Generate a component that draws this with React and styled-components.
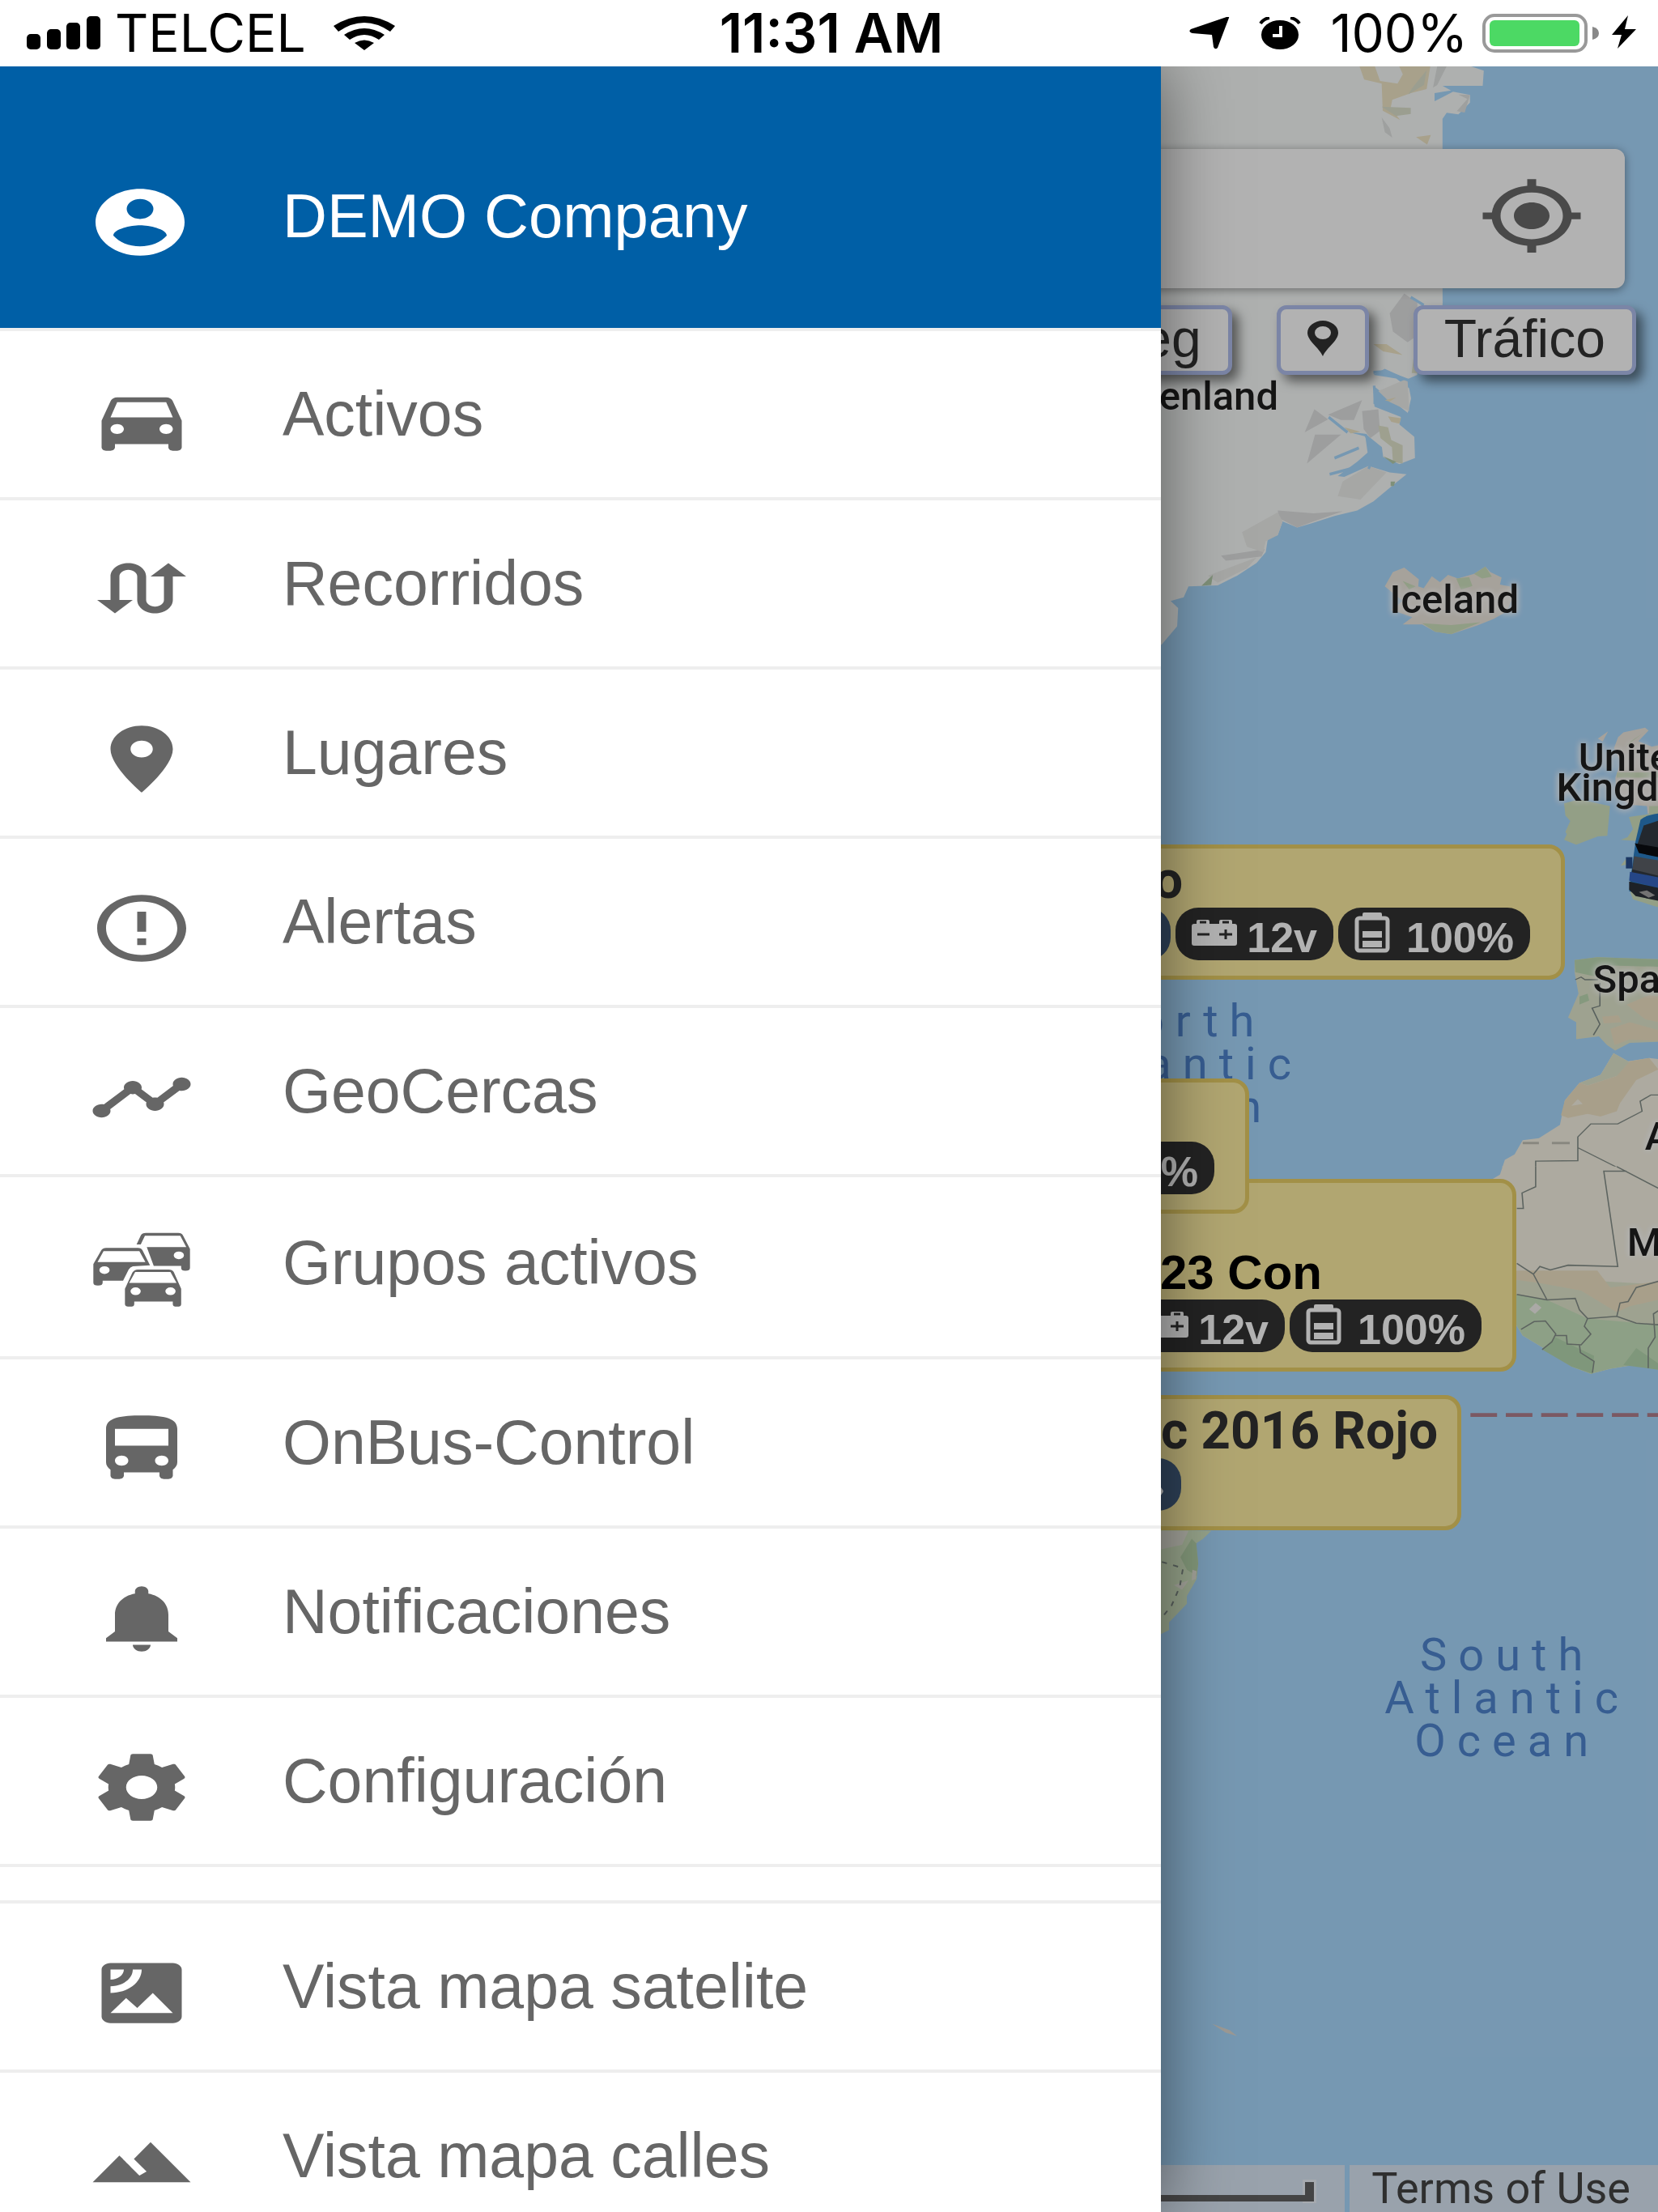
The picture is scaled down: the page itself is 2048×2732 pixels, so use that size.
import React from 'react';
import styled, { createGlobalStyle } from 'styled-components';

const icons = {
  account:
    'M12 2C6.48 2 2 6.48 2 12s4.48 10 10 10 10-4.48 10-10S17.52 2 12 2zm0 3c1.66 0 3 1.34 3 3s-1.34 3-3 3-3-1.34-3-3 1.34-3 3-3zm0 14.2c-2.5 0-4.71-1.28-6-3.22.03-1.99 4-3.08 6-3.08 1.99 0 5.97 1.09 6 3.08-1.29 1.94-3.5 3.22-6 3.22z',
  car: 'M18.92 6.01C18.72 5.42 18.16 5 17.5 5h-11c-.66 0-1.21.42-1.42 1.01L3 12v8c0 .55.45 1 1 1h1c.55 0 1-.45 1-1v-1h12v1c0 .55.45 1 1 1h1c.55 0 1-.45 1-1v-8l-2.08-5.99zM6.5 16c-.83 0-1.5-.67-1.5-1.5S5.67 13 6.5 13s1.5.67 1.5 1.5S7.33 16 6.5 16zm11 0c-.83 0-1.5-.67-1.5-1.5s.67-1.5 1.5-1.5 1.5.67 1.5 1.5-.67 1.5-1.5 1.5zM5 11l1.5-4.5h11L19 11H5z',
  swap: 'M18 4l-4 4h3v7c0 1.1-.9 2-2 2s-2-.9-2-2V8c0-2.21-1.79-4-4-4S5 5.79 5 8v7H2l4 4 4-4H7V8c0-1.1.9-2 2-2s2 .9 2 2v7c0 2.21 1.79 4 4 4s4-1.79 4-4V8h3l-4-4z',
  place:
    'M12 2C8.13 2 5 5.13 5 9c0 5.25 7 13 7 13s7-7.75 7-13c0-3.87-3.13-7-7-7zm0 9.5c-1.38 0-2.5-1.12-2.5-2.5s1.12-2.5 2.5-2.5 2.5 1.12 2.5 2.5-1.12 2.5-2.5 2.5z',
  alert:
    'M11 15h2v2h-2zm0-8h2v6h-2zm.99-5C6.47 2 2 6.48 2 12s4.47 10 9.99 10C17.52 22 22 17.52 22 12S17.52 2 11.99 2zM12 20c-4.42 0-8-3.58-8-8s3.58-8 8-8 8 3.58 8 8-3.58 8-8 8z',
  timeline:
    'M23 8c0 1.1-.9 2-2 2-.18 0-.35-.02-.51-.07l-3.56 3.55c.05.16.07.34.07.52 0 1.1-.9 2-2 2s-2-.9-2-2c0-.18.02-.36.07-.52l-2.55-2.55c-.16.05-.34.07-.52.07s-.36-.02-.52-.07l-4.55 4.56c.05.16.07.33.07.51 0 1.1-.9 2-2 2s-2-.9-2-2 .9-2 2-2c.18 0 .35.02.51.07l4.56-4.55C8.02 9.36 8 9.18 8 9c0-1.1.9-2 2-2s2 .9 2 2c0 .18-.02.36-.07.52l2.55 2.55c.16-.05.34-.07.52-.07s.36.02.52.07l3.55-3.56C19.02 8.35 19 8.18 19 8c0-1.1.9-2 2-2s2 .9 2 2z',
  bus: 'M4 16c0 .88.39 1.67 1 2.22V20c0 .55.45 1 1 1h1c.55 0 1-.45 1-1v-1h8v1c0 .55.45 1 1 1h1c.55 0 1-.45 1-1v-1.78c.61-.55 1-1.34 1-2.22V6c0-3.5-3.58-4-8-4s-8 .5-8 4v10zm3.5 1c-.83 0-1.5-.67-1.5-1.5S6.67 14 7.5 14s1.5.67 1.5 1.5S8.33 17 7.5 17zm9 0c-.83 0-1.5-.67-1.5-1.5s.67-1.5 1.5-1.5 1.5.67 1.5 1.5-.67 1.5-1.5 1.5zm1.5-6H6V6h12v5z',
  bell: 'M12 22c1.1 0 2-.9 2-2h-4c0 1.1.89 2 2 2zm6-6v-5c0-3.07-1.64-5.64-4.5-6.32V4c0-.83-.67-1.5-1.5-1.5s-1.5.67-1.5 1.5v.68C7.63 5.36 6 7.92 6 11v5l-2 2v1h16v-1l-2-2z',
  settings:
    'M19.43 12.98c.04-.32.07-.64.07-.98s-.03-.66-.07-.98l2.11-1.65c.19-.15.24-.42.12-.64l-2-3.46c-.12-.22-.39-.3-.61-.22l-2.49 1c-.52-.4-1.08-.73-1.69-.98l-.38-2.65C14.46 2.18 14.25 2 14 2h-4c-.25 0-.46.18-.49.42l-.38 2.65c-.61.25-1.17.59-1.69.98l-2.49-1c-.23-.09-.49 0-.61.22l-2 3.46c-.13.22-.07.49.12.64l2.11 1.65c-.04.32-.07.65-.07.98s.03.66.07.98l-2.11 1.65c-.19.15-.24.42-.12.64l2 3.46c.12.22.39.3.61.22l2.49-1c.52.4 1.08.73 1.69.98l.38 2.65c.03.24.24.42.49.42h4c.25 0 .46-.18.49-.42l.38-2.65c.61-.25 1.17-.59 1.69-.98l2.49 1c.23.09.49 0 .61-.22l2-3.46c.12-.22.07-.49-.12-.64l-2.11-1.65zM12 15.5c-1.93 0-3.5-1.57-3.5-3.5s1.57-3.5 3.5-3.5 3.5 1.57 3.5 3.5-1.57 3.5-3.5 3.5z',
  satellite:
    'M19 3H5c-1.1 0-2 .9-2 2v14c0 1.1.9 2 2 2h14c1.1 0 2-.9 2-2V5c0-1.1-.9-2-2-2zM5 4.99h3C8 6.65 6.66 8 5 8V4.99zM5 12v-2c2.76 0 5-2.25 5-5.01h2C12 8.86 8.87 12 5 12zm0 6l3.5-4.5 2.5 3.01L14.5 12l4.5 6H5z',
  terrain: 'M14 6l-3.75 5 2.85 3.8-1.6 1.2C9.81 13.75 7 10 7 10l-6 8h22L14 6z',
  gps: 'M12 8c-2.21 0-4 1.79-4 4s1.79 4 4 4 4-1.79 4-4-1.79-4-4-4zm8.94 3c-.46-4.17-3.77-7.48-7.94-7.94V1h-2v2.06C6.83 3.52 3.52 6.83 3.06 11H1v2h2.06c.46 4.17 3.77 7.48 7.94 7.94V23h2v-2.06c4.17-.46 7.48-3.77 7.94-7.94H23v-2h-2.06zM12 19c-3.87 0-7-3.13-7-7s3.13-7 7-7 7 3.13 7 7-3.13 7-7 7z',
};

const menu = [
  { label: 'Activos', icon: 'car' },
  { label: 'Recorridos', icon: 'swap' },
  { label: 'Lugares', icon: 'place' },
  { label: 'Alertas', icon: 'alert' },
  { label: 'GeoCercas', icon: 'timeline' },
  { label: 'Grupos activos', icon: 'group', tall: true },
  { label: 'OnBus-Control', icon: 'bus' },
  { label: 'Notificaciones', icon: 'bell' },
  { label: 'Configuración', icon: 'settings' },
];

const mapMenu = [
  { label: 'Vista mapa satelite', icon: 'satellite' },
  { label: 'Vista mapa calles', icon: 'terrain' },
];

const Icon = ({ name }) => (
  <IconSvg viewBox='0 0 24 24' preserveAspectRatio='none' aria-hidden='true'>
    <path d={icons[name]} />
  </IconSvg>
);

const GroupIcon = () => (
  <IconSvg
    viewBox='189 1204 230 250'
    preserveAspectRatio='none'
    aria-hidden='true'
  >
    <path
      fillRule='evenodd'
      d='M268 1390L284 1340Q288 1330 296 1330H362Q370 1330 373 1338L389 1390V1438Q389 1446 380 1446 371 1446 371 1438V1430H288V1438Q288 1446 279 1446 268 1446 268 1438ZM277 1372H379L366 1338H290Z M280 1398a11 12 0 1 0 22 0a11 12 0 1 0 -22 0Z M355 1398a11 12 0 1 0 22 0a11 12 0 1 0 -22 0Z'
    />
    <path
      fillRule='evenodd'
      d='M200 1313L216 1273Q219 1263 228 1263H296Q303 1263 306 1271L322 1317 285 1320Q279 1322 276 1330L264 1365H220V1371Q220 1380 210 1380 200 1380 200 1371ZM209 1307H312L299 1273H222Z M213 1332a11 12 0 1 0 22 0a11 12 0 1 0 -22 0Z'
    />
    <path
      fillRule='evenodd'
      d='M293 1252L302 1224Q305 1216 313 1216H383Q390 1216 393 1224L408 1266V1325Q408 1334 398 1334 389 1334 389 1325V1319H330L315 1260H400L387 1225H311L302 1252Z M373 1286a11 12 0 1 0 22 0a11 12 0 1 0 -22 0Z'
    />
  </IconSvg>
);

const BatteryIcon = () => (
  <svg width='44' height='50' viewBox='0 0 44 50' aria-hidden='true'>
    <rect x='10' y='0' width='24' height='8' rx='2' fill='#fff' />
    <rect
      x='3'
      y='7'
      width='38'
      height='40'
      rx='3'
      fill='none'
      stroke='#fff'
      strokeWidth='5'
    />
    <path d='M10 23h24v8H10zM10 35h24v8H10z' fill='#fff' />
  </svg>
);

const CarBatteryIcon = () => (
  <svg width='56' height='32' viewBox='0 0 56 32' aria-hidden='true'>
    <path
      fill='#fff'
      d='M8 0h12q2 0 2 2v3h12V2q0-2 2-2h12q2 0 2 2v3h3q3 0 3 3v21q0 3-3 3H3q-3 0-3-3V8q0-3 3-3h3V2q0-2 2-2z'
    />
    <path stroke='#333' strokeWidth='3' d='M7 18h15M34 18h16M42 12v12M10 3h8M38 3h8' />
  </svg>
);

const StatusBarView = () => (
  <StatusBar>
    <StatusGroup>
      <svg width='91' height='42' viewBox='0 0 91 42' aria-hidden='true'>
        <rect y='22' width='17' height='19' rx='5' />
        <rect x='25' y='16' width='17' height='25' rx='5' />
        <rect x='49' y='8' width='17' height='33' rx='5' />
        <rect x='74' y='0' width='17' height='41' rx='5' />
      </svg>
      <span>TELCEL</span>
      <Wifi width='76' height='42' viewBox='0 0 76 42' aria-hidden='true'>
        <path d='M0 12Q38-12 76 12l-6 7Q38-3 6 19z' />
        <path d='M13 23Q38 7 63 23l-7 6Q38 17 20 29z' />
        <path d='M26 33Q38 26 50 33L38 42z' />
      </Wifi>
    </StatusGroup>
    <Clock>11:31 AM</Clock>
    <StatusGroup $end>
      <StatusIcons>
        <svg width='52' height='40' viewBox='0 0 52 40' aria-hidden='true'>
          <path d='M49 1L35 38q-3 3-5-1l-2-15-24-2q-6-2-2-5L46 0q4-1 3 1z' />
        </svg>
        <svg width='52' height='40' viewBox='0 0 52 40' aria-hidden='true'>
          <ellipse cx='26' cy='22' rx='23' ry='18' />
          <path
            d='M2 8Q6 2 13 1M50 8Q46 2 39 1'
            stroke='#000'
            strokeWidth='4'
            fill='none'
          />
          <path d='M27 11v12H17' stroke='#fff' strokeWidth='4' fill='none' />
        </svg>
      </StatusIcons>
      <span>100%</span>
      <svg width='190' height='48' viewBox='0 0 190 48' aria-hidden='true'>
        <rect
          x='2'
          y='2'
          width='126'
          height='44'
          rx='13'
          fill='none'
          stroke='#999'
          strokeWidth='4'
        />
        <rect x='9' y='8' width='111' height='32' rx='6' fill='#4cd964' />
        <path d='M136 16q8 2 8 8t-8 8z' fill='#888' />
        <path d='M180 2l-20 24h12l-5 17 23-24h-14z' />
      </svg>
    </StatusGroup>
  </StatusBar>
);

const MapDrawing = () => (
  <Terrain viewBox='1434 82 614 2650' preserveAspectRatio='xMaxYMin slice' aria-hidden='true'>
    {/* northern Greenland */}
    <g transform='translate(1024 0) scale(.6531 .3333)'>
      <path
        fill='#f9fcfb'
        d='M600 240H1205L1238 262 1236 318 1185 318 1172 318 1160 318 1176 335 1145 345 1145 375 1180 340 1212 352 1212 380 1190 424 1168 418 1160 440V1160H600Z'
      />
      <path fill='#f1e7c7' d='M1003 245H1032L1042 300 1075 310 1085 275 1078 245H1137L1130 330 1100 345 1065 370 1062 400 1080 445 1047 410 1045 310 1012 295ZM1110 508l28-8-7 35z' />
      <path fill='#e3e5e4' d='M1150 245h18l-18 70-8 10zM1190 350l22 2-10 65-15-5 20-45zM1045 435l15 40 5 35-14-20z' />
      <path fill='#dfe3cf' d='M1130 260l-5 55-30 35 10-30zM1045 395l55 5v22l-28 8z' />
    </g>
    {/* eastern Greenland, Iceland */}
    <g transform='translate(1420 340) scale(.4005 .4464)'>
      <path
        fill='#f9fcfb'
        d='M0 0H900L903 78 880 80 825 90 825 275 795 287 725 258 690 275 760 285 800 312 806 340 796 380 690 305 690 355 775 390 770 412 816 446 818 505 770 522 720 502 716 475 665 438 610 432 552 392 600 430 665 445 672 490 640 515 580 555 600 557 675 527 740 545 792 550 750 580 690 625 640 650 570 665 500 685 455 697 410 680 395 718 365 725 358 765 330 795 270 830 210 857 120 860 105 890 65 900 88 920 85 970 38 1020 0 1040Z'
      />
      <path fill='#e1e2e3' d='M740 105L785 50 825 75 828 165 795 185 750 155ZM550 385L655 345 630 400 590 400ZM508 370l42 28-72 36zM510 440h80l-105 80zM395 650l110 8 90-6-95 30-45 15-55-25zM220 775l135-18-10 20-110 12zM655 375l50-5 5 60-30 20-20-25z' />
      <path fill='#eeefec' d='M285 710L395 655 410 680 395 718 358 735 350 765 300 750ZM595 570L675 527 730 545 650 620 580 610ZM705 320l90-35 5 90-60-25zM180 830L330 780 300 810 210 850z' />
      <path fill='#f1e7c7' d='M690 190h40l50 30-60-10zM735 390l40 5-5 15-25-5zM600 420l50 12-30 5zM725 345l35-8-20 12z' />
      <path fill='#e2e6cd' d='M705 415l30 5 10 35 35 15v50l-30-5-3-40-35-25zM820 180h10v90h-22z' />
      <path fill='#b7cfae' d='M160 858l35-30-5 28zM743 570h14l-4 12h-10zM720 500l40 15-10 6z' />
      <path fill='none' stroke='#aadaff' strokeWidth='8' d='M805 60l40 22M690 268l35-2 80 26M552 392l58 42M570 505l75-28M555 550l75-18M692 305l5 55 100 35M665 440l30 50-20 45' />
      <path
        fill='#eee8de'
        d='M725 860L750 820 785 808 830 840 828 860 845 865 870 832 895 848 920 828 950 838 1000 825 1035 805 1050 820 1085 835 1080 855 1110 860 1120 890 1100 930 1060 950 1010 968 930 992 880 985 840 965 780 965 810 945 745 925 780 900Z'
      />
      <path fill='#cfe2bf' d='M945 838l40-4 10 25-35 10zM1000 825l35-20 20 28-30 5zM840 962l90 5 90-8-90 33-50-7zM780 845l40 15-20 8z' />
    </g>
    {/* British Isles */}
    <g transform='translate(1930 880) scale(.3333)'>
      <path fill='#eee8de' d='M190 130L205 90 225 72 305 55 318 65 280 105 330 125 354 120V350L315 375 312 345 250 340 200 300 195 240 215 180ZM130 95l38-27-20 38z' />
      <path fill='#d3e4c0' d='M5 335L60 320 175 345 165 455 130 457 50 488 5 470 15 450 10 440 28 400 10 380ZM245 385L354 370V480L215 470 240 460 260 430ZM215 565l20-25 20 20zM245 650l109 30v40l-94-30zM200 220h154v20H200zM290 80l22-15-60 40-20 20zM320 345h34v30h-34z' />
    </g>
    {/* Iberia and the Maghreb */}
    <g transform='translate(1420 1000) scale(.4005 .3333)'>
      <path fill='#e3e9cf' d='M1310 555L1380 545 1568 552V858L1480 862 1435 890 1410 870 1385 838 1315 848V785L1290 768 1322 680 1310 600Z' />
      <path fill='#bfdcb5' d='M1310 555L1380 545 1568 552V580L1400 575 1370 615 1312 600ZM1325 690l25-10 5 25-30 15z' />
      <path fill='#f1e4c6' d='M1470 720l70-35 28 5v95l-40-10zM1420 810l60-25 88 30v40l-90-5-45 20zM1395 765l50-5 10 25-55 5z' />
      <path fill='none' stroke='#7f8a86' strokeWidth='4' d='M1312 628l18-10 12 10h40M1388 640v85l-24 8 24 60-20 40' />
      <path fill='#f8f4e6' d='M1430 900L1475 930 1540 918 1568 922V1440H1120L1055 1368 1080 1350 1095 1295 1125 1275 1150 1222 1200 1215 1265 1165 1280 1075 1325 1010 1390 980Z' />
      <path fill='#e3e9cf' d='M1430 900L1475 930 1500 965 1440 985 1350 1020 1325 1010 1390 980Z' />
      <path fill='#f1e4c6' d='M1325 1010L1350 1020 1440 985 1480 930 1540 918 1568 960 1500 1000 1450 1085 1440 1115 1390 1135 1350 1125 1290 1140 1268 1130 1280 1075ZM1300 1095l20-25 15 18z' fillRule='evenodd' />
      <path fill='none' stroke='#86908a' strokeWidth='4' d='M1568 1055H1545L1512 1078 1518 1115 1443 1162H1360L1320 1210V1298L1190 1300V1398L1150 1418V1440M1320 1250L1568 1400M1470 1335L1400 1337 1413 1440' />
      <path stroke='#c5c3b8' strokeWidth='9' d='M1150 1233h50M1240 1233h55' />
    </g>
    {/* West Africa, Brazil, equator */}
    <g transform='translate(1420 1440) scale(.4005 .3827)'>
      <path fill='#f8f4e6' d='M1085 0H1568V655L1490 640 1420 652 1360 668 1300 645 1230 595 1150 545 1130 510V40Z' />
      <path fill='#e3e9cf' d='M1130 355L1568 380V560L1130 510Z' />
      <path fill='#f1e4c6' d='M1130 335H1380L1420 390 1568 370V430L1480 450 1440 470 1330 400 1200 375 1130 365Z' />
      <path fill='#cbe5c0' d='M1130 412L1225 430 1350 490 1568 510V655L1490 640 1420 652 1360 668 1300 645 1230 595 1150 545 1130 510Z' />
      <path fill='#b7d9b0' d='M1210 590l40-40 120 60-5 58-65-23zM1460 640l40-55 68 50v20z' />
      <path fill='#f4f3ee' d='M1170 460l20-20 18 15-20 20z' />
      <path fill='none' stroke='#86908a' strokeWidth='4' d='M1190 0V65L1148 85 1152 135H1132M1440 0L1568 70M1470 15H1400L1443 322 1290 318 1235 333 1203 322 1183 347 1132 312M1183 347L1225 430 1312 425 1325 462 1350 490 1340 515 1360 540 1330 575 1287 572 1285 545 1250 545M1132 412L1225 430M1145 525L1185 500 1220 498 1252 540 1240 565 1210 590M1350 490L1440 483 1500 505 1568 510M1440 483L1450 440 1475 435 1500 390 1568 370M1325 575L1328 600 1370 628 1365 665M1568 465L1553 475 1558 550 1537 585V650' />
      <path stroke='#b0808f' strokeWidth='12' strokeDasharray='82 27' d='M989 801H1568' />
      <path fill='#d6e8c4' d='M0 1170L190 1175 165 1200 143 1215 150 1280 145 1330 115 1385 115 1410 60 1470 60 1495 30 1510H0Z' />
      <path fill='#bad8ae' d='M130 1200l14 15 6 65-5 40-30-20-20-40z' />
      <path fill='#e9e8dc' d='M30 1175h90l-20 45-70 15zM75 1350l45-15-20 30zM132 1300l13 5-3 25-12 5z' />
      <path fill='none' stroke='#7f8a86' strokeWidth='5' strokeDasharray='16 20' d='M38 1275l65 20-10 60-25 60-30 40' />
    </g>
    <path fill='#e0dcd4' d='M1497 2498l22 8 9 7-14-4z' />
    {/* bus marker */}
    <g>
      <path fill='#2b7fc4' d='M2048 1004q-16 2-22 8l-6 26-6 44-2 18 36 8z' />
      <path fill='#333a42' d='M2048 1013l-18 6-8 24 26 4zM2048 1067l-30-4-3 14 33 7z' />
      <path fill='#0b0d12' d='M2048 1046l-29-5 5 12 24 5z' />
      <path fill='#5c6168' d='M2048 1062l-30-5-2 16 32 8z' />
      <path fill='#3565c0' d='M2048 1083l-35-7-1 11 36 9z' />
      <path fill='#2a3038' d='M2048 1096l-36-8v10l8 8 28 6z' />
      <path fill='#a5a5a5' d='M2024 1101l10-2 10 6-8 3z' />
      <path fill='#27508f' d='M2008 1058h8v14h-8z' />
    </g>
  </Terrain>
);

const Battery = () => (
  <Chip>
    <BatteryIcon />
    100%
  </Chip>
);

const Voltage = () => (
  <Chip $tight>
    <CarBatteryIcon />
    12v
  </Chip>
);

const App = () => {
  return (
    <Screen>
      <GlobalStyle />
      <StatusBarView />
      <Stage>
        <MapView>
          <MapCanvas>
            <MapDrawing />
            <Place $top={389} $right={469}>
              Greenland
            </Place>
            <Place $top={640} $right={172}>
              Iceland
            </Place>
            <Place $top={835} $right={-71}>
              {'United\nKingdom'}
            </Place>
            <Place $top={1109} $right={-43}>
              Spain
            </Place>
            <Place $top={1303} $right={-139}>
              Algeria
            </Place>
            <Place $top={1434} $right={-56}>
              Mali
            </Place>
            <Ocean $top={1153} $right={439}>
              {'North\nAtlantic\nOcean'}
            </Ocean>
            <Ocean $top={1936} $right={35}>
              {'South\nAtlantic\nOcean'}
            </Ocean>

            <AssetCard $top={1374} $right={175} $stacked>
              <AssetName $inset={235} $plain>
                Tracto 23 Con
              </AssetName>
              <Chips>
                <Voltage />
                <Battery />
              </Chips>
            </AssetCard>
            <AssetCard $top={1250} $right={505}>
              <AssetName $inset={40}>&nbsp;</AssetName>
              <Chips>
                <Battery />
              </Chips>
            </AssetCard>
            <AssetCard $top={961} $right={115}>
              <AssetName $inset={467}>Rojo</AssetName>
              <Chips>
                <Chip $blue>›</Chip>
                <Voltage />
                <Battery />
              </Chips>
            </AssetCard>
            <AssetCard $top={1641} $right={243}>
              <AssetName>Civic 2016 Rojo</AssetName>
              <Chips $inset={303}>
                <Chip $blue>›</Chip>
              </Chips>
            </AssetCard>
          </MapCanvas>

          <SearchBar>
            <SearchInput type='text' aria-label='Buscar' />
            <LocateButton type='button' aria-label='Mi ubicación'>
              <Icon name='gps' />
            </LocateButton>
          </SearchBar>
          <Filters>
            <FilterButton type='button'>Seg</FilterButton>
            <FilterButton type='button' aria-label='Lugares'>
              <svg width='38' height='44' viewBox='0 0 38 44' aria-hidden='true'>
                <path
                  fill='#333'
                  fillRule='evenodd'
                  d='M19 44C15 34 0 25 0 15A19 15 0 0 1 38 15C38 25 23 34 19 44ZM9 15a10 8 0 1 0 20 0a10 8 0 1 0 -20 0Z'
                />
              </svg>
            </FilterButton>
            <FilterButton type='button'>Tráfico</FilterButton>
          </Filters>
          <MapFooter>
            <ScaleBar>
              <svg width='260' height='36' viewBox='0 0 260 36' aria-hidden='true'>
                <path d='M208 18V2h17v29h-17z' fill='#fff' opacity='.5' />
                <path d='M0 21h211V5h11v24H0z' fill='#626262' />
              </svg>
            </ScaleBar>
            <Terms href='#terms'>Terms of Use</Terms>
          </MapFooter>
        </MapView>
        <Scrim />

        <Drawer>
          <DrawerHeader>
            <Icon name='account' />
            <h1>DEMO Company</h1>
          </DrawerHeader>
          <nav>
            <MenuList>
              {menu.map((item) => (
                <li key={item.label}>
                  <MenuLink href='#menu' $tall={item.tall}>
                    {item.icon === 'group' ? (
                      <GroupIcon />
                    ) : (
                      <Icon name={item.icon} />
                    )}
                    {item.label}
                  </MenuLink>
                </li>
              ))}
            </MenuList>
            <MenuList $second>
              {mapMenu.map((item) => (
                <li key={item.label}>
                  <MenuLink href='#map'>
                    <Icon name={item.icon} />
                    {item.label}
                  </MenuLink>
                </li>
              ))}
            </MenuList>
          </nav>
        </Drawer>
      </Stage>
    </Screen>
  );
};

const GlobalStyle = createGlobalStyle`
  * {
    box-sizing: border-box;
  }

  body {
    margin: 0;
    font-family: 'Liberation Sans', Arial, sans-serif;
  }

  svg {
    display: block;
    flex-shrink: 0;
  }
`;

const Screen = styled.div`
  display: flex;
  flex-direction: column;
  height: 100vh;
  overflow: hidden;
  background: #fff;
`;

const StatusBar = styled.header`
  display: grid;
  grid-template-columns: 1fr auto 1fr;
  align-items: center;
  height: 82px;
  padding: 0 27px 0 33px;
  font-family: Inter, sans-serif;
  font-size: 64px;
  line-height: 80px;
  color: #000;
`;

const StatusGroup = styled.div`
  display: flex;
  align-items: center;
  justify-content: ${({ $end }) => ($end ? 'flex-end' : 'flex-start')};
  gap: 18px;
`;

const StatusIcons = styled.div`
  display: flex;
  gap: 34px;
  margin-right: 18px;
`;

const Wifi = styled.svg`
  margin-left: 16px;
`;

const Clock = styled.time`
  font-size: 67px;
  font-weight: 600;
`;

const Stage = styled.div`
  position: relative;
  display: flex;
  flex: 1;
  min-height: 0;
  overflow: hidden;
`;

const MapView = styled.main`
  display: flex;
  flex: 1;
  flex-direction: column;
`;

const MapCanvas = styled.div`
  position: absolute;
  inset: 0;
  overflow: hidden;
  background: #aadaff;
`;

const Terrain = styled.svg`
  position: absolute;
  top: 0;
  right: 0;
  width: 30%;
  height: 100%;
`;

const Place = styled.span`
  position: absolute;
  top: ${({ $top }) => $top}px;
  right: ${({ $right }) => $right}px;
  color: #1f1f1f;
  font: 500 49px/37px Roboto, sans-serif;
  text-align: center;
  white-space: pre;
  text-shadow: 0 0 8px #fff, 0 0 8px #fff;
`;

const Ocean = styled.span`
  position: absolute;
  top: ${({ $top }) => $top}px;
  right: ${({ $right }) => $right}px;
  color: #4f86d0;
  font: 400 56px/53px Roboto, sans-serif;
  letter-spacing: 14px;
  text-align: center;
  white-space: pre;
`;

const AssetCard = styled.article`
  position: absolute;
  top: ${({ $top }) => $top}px;
  right: ${({ $right }) => $right}px;
  padding-top: ${({ $stacked }) => ($stacked ? 78 : 7)}px;
  padding-bottom: 19px;
  padding-left: 40px;
  background: #feeea3;
  border: 5px solid #e8ce66;
  border-radius: 20px;
`;

const AssetName = styled.h2`
  margin: 0;
  padding-right: ${({ $inset = 24 }) => $inset}px;
  color: ${({ $plain }) => ($plain ? '#000' : '#333')};
  font-family: ${({ $plain }) =>
    $plain ? "'Liberation Sans', sans-serif" : 'Roboto, sans-serif'};
  font-size: ${({ $plain }) => ($plain ? 60 : 64)}px;
  font-weight: 700;
  line-height: 66px;
  text-align: right;
  white-space: nowrap;
`;

const Chips = styled.div`
  display: flex;
  justify-content: flex-end;
  gap: 6px;
  padding-right: ${({ $inset = 0 }) => 38 + $inset}px;
`;

const Chip = styled.span`
  display: flex;
  align-items: center;
  gap: ${({ $tight }) => ($tight ? 12 : 20)}px;
  height: 65px;
  padding: 8px 20px 0;
  border-radius: 28px;
  background: ${({ $blue }) => ($blue ? '#435e7e' : '#333')};
  color: #fff;
  font-size: 52px;
  font-weight: 700;

  svg {
    margin-bottom: 12px;
  }
`;

const SearchBar = styled.form`
  position: relative;
  display: flex;
  align-items: center;
  height: 172px;
  margin: 102px 41px 0;
  padding: 0 49px 8px;
  background: #fff;
  border-radius: 12px;
  box-shadow: 0 2px 12px rgba(0, 0, 0, 0.4);
`;

const SearchInput = styled.input`
  flex: 1;
  border: 0;
  outline: 0;
  background: transparent;
  font-size: 64px;
`;

const LocateButton = styled.button`
  padding: 0;
  border: 0;
  background: transparent;
  color: #696969;

  svg {
    margin: 0;
  }
`;

const Filters = styled.div`
  position: relative;
  display: flex;
  justify-content: flex-end;
  gap: 55px;
  padding: 21px 27px 0;
`;

const FilterButton = styled.button`
  height: 86px;
  padding: 0 33px 4px;
  border: 5px solid #b0bfee;
  border-radius: 12px;
  background: #fff;
  color: #333;
  font: 400 66px/66px 'Liberation Sans', Arial, sans-serif;
  box-shadow: 8px 8px 14px rgba(0, 0, 0, 0.5);
`;

const MapFooter = styled.footer`
  position: relative;
  display: flex;
  justify-content: flex-end;
  gap: 6px;
  height: 58px;
  margin-top: auto;
`;

const ScaleBar = styled.div`
  display: flex;
  justify-content: flex-end;
  width: 340px;
  padding-top: 16px;
  background: #dce9f6;
`;

const Terms = styled.a`
  padding: 0 34px 0 27px;
  background: #dce9f6;
  color: #444;
  font: 400 54px/58px Roboto, sans-serif;
  text-decoration: none;
`;

const Scrim = styled.div`
  position: absolute;
  inset: 0;
  background: rgba(0, 0, 0, 0.3);
`;

const Drawer = styled.aside`
  position: absolute;
  inset: 0 auto 0 0;
  width: 70%;
  overflow: hidden;
  background: #fff;
  box-shadow: 0 0 80px rgba(0, 0, 0, 0.5);
`;

const DrawerHeader = styled.div`
  display: flex;
  align-items: center;
  gap: 110px;
  height: 323px;
  padding: 45px 0 0 107px;
  background: #005fa6;
  color: #fff;

  h1 {
    margin: 0;
    font-size: 76px;
    font-weight: 400;
  }
`;

const IconSvg = styled.svg`
  width: 132px;
  height: 99px;
  margin-top: 16px;
  fill: currentColor;
`;

const MenuList = styled.ul`
  margin: ${({ $second }) => ($second ? 41 : 0)}px 0 0;
  padding: 0;
  border-top: 4px solid #eee;
  list-style: none;
`;

const MenuLink = styled.a`
  display: flex;
  align-items: center;
  gap: 108px;
  height: ${({ $tall }) => ($tall ? 225 : 209)}px;
  padding-bottom: ${({ $tall }) => ($tall ? 10 : 0)}px;
  padding-left: 109px;
  border-bottom: 4px solid #eee;
  color: #666;
  font-size: 77px;
  text-decoration: none;
  white-space: nowrap;
`;

export default App;
